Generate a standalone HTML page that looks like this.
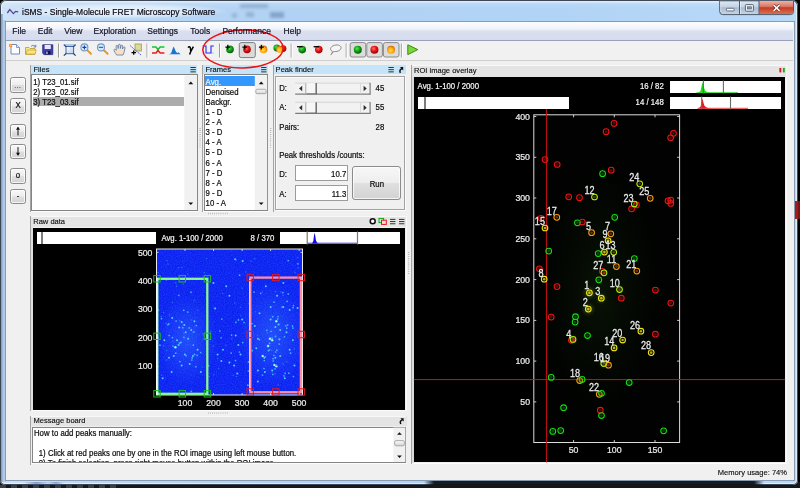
<!DOCTYPE html>
<html>
<head>
<meta charset="utf-8">
<title>iSMS</title>
<style>
html,body{margin:0;padding:0;background:#000;}
body{width:800px;height:488px;overflow:hidden;position:relative;font-family:"Liberation Sans",sans-serif;font-size:7.8px;color:#0c0c0c;}
#win div,#win span,#win svg{position:absolute;}
#win{position:absolute;left:0;top:0;width:800px;height:488px;overflow:hidden;filter:blur(0.38px);}
.t{white-space:nowrap;line-height:10px;-webkit-text-stroke:0.2px currentColor;transform:scaleY(1.06);transform-origin:0 75%;}
.h{font-size:7.55px;transform:scaleY(1.05);-webkit-text-stroke:0.12px currentColor;}
.w{color:#f6f6f6;}
.mi{font-size:8.5px;color:#141428;transform:none;}
.ax{font-size:8.75px;transform:scaleY(1.12);transform-origin:50% 55%;-webkit-text-stroke:0.22px currentColor;color:#ececec;}
.lbl{font-size:9.1px;transform:scaleY(1.14);transform-origin:50% 60%;-webkit-text-stroke:0.22px currentColor;color:#ececec;}
#frame{left:0px;top:0px;width:798px;height:485px;border-radius:6px 6px 5px 5px;background:linear-gradient(90deg,#cfe2f6 0%,#bcd8f4 10%,#b1d2f4 35%,#b1d3f5 70%,#b9d9f8 100%);box-shadow:inset 0 0 0 1px #3c4654, inset 0 0 0 2px rgba(255,255,255,.55);}
.btn{border:1px solid #8b8b8b;border-radius:2.5px;background:linear-gradient(180deg,#f7f7f7 0%,#eeeeee 48%,#dfdfdf 52%,#d3d3d3 100%);box-shadow:inset 0 0 0 1px rgba(255,255,255,.75);box-sizing:border-box;}
#win svg.main{z-index:1}
#win span.t{z-index:2}
</style>
</head>
<body>
<div id="win">
<div class="" style="left:0px;top:482px;width:800px;height:6px;background:#15171b"></div>
<div id="frame"></div>
<div class="" style="left:2px;top:1.6px;width:794px;height:7px;background:linear-gradient(180deg,rgba(255,255,255,.45),rgba(255,255,255,.12) 25%,rgba(255,255,255,0));border-radius:4px 4px 0 0"></div>
<div class="" style="left:240px;top:4px;width:28px;height:4px;background:rgba(90,120,160,.4);filter:blur(1.6px)"></div>
<div class="" style="left:246px;top:12px;width:8px;height:5px;background:rgba(90,120,160,.35);filter:blur(1.5px)"></div>
<div class="" style="left:270px;top:12px;width:14px;height:6px;background:rgba(80,110,150,.45);filter:blur(1.6px)"></div>
<div class="" style="left:232px;top:13px;width:5px;height:5px;background:rgba(90,120,160,.3);filter:blur(1.5px)"></div>
<div class="" style="left:12px;top:3px;width:215px;height:16px;background:radial-gradient(ellipse at center,rgba(255,255,255,.75) 0%,rgba(255,255,255,.5) 45%,rgba(255,255,255,0) 72%);"></div>
<div class="" style="left:1px;top:14px;width:2.2px;height:468px;background:linear-gradient(90deg,rgba(40,70,120,.55),rgba(60,100,160,.25))"></div>
<div class="" style="left:3.2px;top:20px;width:2.6px;height:462px;background:rgba(90,130,190,.25)"></div>
<div class="" style="left:2px;top:481px;width:794px;height:3.8px;background:linear-gradient(90deg,rgba(16,20,24,0) 0,rgba(16,20,24,0) 422px,rgba(16,20,24,.96) 432px,rgba(16,20,24,.96) 752px,rgba(16,20,24,0) 762px)"></div>
<div class="" style="left:24px;top:481.6px;width:40px;height:3px;background:linear-gradient(90deg,rgba(60,90,140,0),rgba(60,90,140,.5) 30%,rgba(60,90,140,.1) 60%,rgba(60,90,140,.45) 80%,rgba(60,90,140,0))"></div>
<div class="" style="left:0px;top:485.4px;width:120px;height:2.6px;background:repeating-linear-gradient(90deg,#3a3e46 0,#3a3e46 6px,#16181c 6px,#16181c 11px)"></div>
<div class="" style="left:793.6px;top:201px;width:4.2px;height:18px;background:#a31c1c;filter:blur(.6px)"></div>
<div class="" style="left:797.8px;top:201px;width:2.2px;height:18px;background:#7a1414"></div>
<svg style="left:7px;top:7px" width="13" height="10" viewBox="0 0 13 10"><path d="M0.3 6 L2.8 2.6 L6.4 6.6 L8.6 4.4 L11.2 4.8" fill="none" stroke="#53449c" stroke-width="1.3"/></svg>
<span class="t " style="left:22px;top:5.8px;font-size:8.47px;line-height:12px;color:#0a0a14;transform:none;">iSMS - Single-Molecule FRET Microscopy Software</span>
<div class="" style="left:5.5px;top:21.5px;width:788px;height:458.8px;background:#f0f0f0;box-shadow:0 0 0 1px #8a9ab0;"></div>
<div class="" style="left:6px;top:22px;width:787px;height:18px;background:linear-gradient(180deg,#fcfdff 0%,#f0f3fa 38%,#dbe0f0 52%,#d6dbee 100%);"></div>
<div class="" style="left:6px;top:40px;width:787px;height:1px;background:#98a0b6"></div>
<span class="t mi" style="left:12.3px;top:26.3px;">File</span>
<span class="t mi" style="left:37.8px;top:26.3px;">Edit</span>
<span class="t mi" style="left:64.2px;top:26.3px;">View</span>
<span class="t mi" style="left:93.5px;top:26.3px;">Exploration</span>
<span class="t mi" style="left:147.3px;top:26.3px;">Settings</span>
<span class="t mi" style="left:190.3px;top:26.3px;">Tools</span>
<span class="t mi" style="left:222.4px;top:26.3px;">Performance</span>
<span class="t mi" style="left:283.6px;top:26.3px;">Help</span>
<div class="" style="left:6px;top:41px;width:787px;height:19px;background:#f1f1f1"></div>
<div class="" style="left:6px;top:59.6px;width:787px;height:1px;background:#cfcfcf"></div>
<div class="btn" style="left:10.2px;top:77.2px;width:15.6px;height:15.4px;"></div>
<div class="btn" style="left:10.2px;top:98.4px;width:15.6px;height:15.4px;"></div>
<div class="btn" style="left:10.2px;top:123.5px;width:15.6px;height:15.4px;"></div>
<div class="btn" style="left:10.2px;top:143.7px;width:15.6px;height:15.4px;"></div>
<div class="btn" style="left:10.2px;top:168.2px;width:15.6px;height:15.4px;"></div>
<div class="btn" style="left:10.2px;top:188.8px;width:15.6px;height:15.4px;"></div>
<span class="t " style="left:14.3px;top:80.5px;color:#666;">...</span>
<span class="t " style="left:15.4px;top:101.3px;">X</span>
<span class="t " style="left:15.8px;top:170.6px;">o</span>
<span class="t " style="left:16.7px;top:191.5px;">-</span>
<div class="" style="left:30.2px;top:65px;width:1px;height:147px;background:#a4a4a4"></div>
<div class="" style="left:31.2px;top:65.3px;width:166.2px;height:9.1px;background:#c5e4f9"></div>
<span class="t h" style="left:33.5px;top:64.6px;">Files</span>
<div class="" style="left:31.4px;top:74.4px;width:166.4px;height:136.6px;background:#fff;border:1px solid #858585;box-sizing:border-box"></div>
<div class="" style="left:31px;top:211.2px;width:167px;height:1px;background:#fcfcfc"></div>
<div class="" style="left:33px;top:96.9px;width:151.2px;height:9.4px;background:#acacac"></div>
<span class="t " style="left:33.2px;top:78.2px;">1) T23_01.sif</span>
<span class="t " style="left:33.2px;top:88.2px;">2) T23_02.sif</span>
<span class="t " style="left:33.2px;top:98.2px;">3) T23_03.sif</span>
<div class="" style="left:202.4px;top:65px;width:1px;height:147px;background:#a4a4a4"></div>
<div class="" style="left:203.4px;top:65.3px;width:64.8px;height:9.1px;background:#c5e4f9"></div>
<span class="t h" style="left:205.4px;top:64.6px;">Frames</span>
<div class="" style="left:203.5px;top:74.4px;width:64.5px;height:136.6px;background:#fff;border:1px solid #858585;box-sizing:border-box"></div>
<div class="" style="left:203px;top:211.2px;width:65.5px;height:1px;background:#fcfcfc"></div>
<div class="" style="left:204.6px;top:76.4px;width:50.1px;height:9.6px;background:#3397fd"></div>
<span class="t w" style="left:205.6px;top:77.7px;">Avg.</span>
<span class="t " style="left:205.6px;top:87.8px;">Denoised</span>
<span class="t " style="left:205.6px;top:97.9px;">Backgr.</span>
<span class="t " style="left:205.6px;top:108.0px;">1 - D</span>
<span class="t " style="left:205.6px;top:118.1px;">2 - A</span>
<span class="t " style="left:205.6px;top:128.2px;">3 - D</span>
<span class="t " style="left:205.6px;top:138.3px;">4 - A</span>
<span class="t " style="left:205.6px;top:148.4px;">5 - D</span>
<span class="t " style="left:205.6px;top:158.5px;">6 - A</span>
<span class="t " style="left:205.6px;top:168.6px;">7 - D</span>
<span class="t " style="left:205.6px;top:178.7px;">8 - A</span>
<span class="t " style="left:205.6px;top:188.8px;">9 - D</span>
<span class="t " style="left:205.6px;top:198.89999999999998px;">10 - A</span>
<div class="" style="left:273.4px;top:65px;width:1px;height:147px;background:#a4a4a4"></div>
<div class="" style="left:274.4px;top:65.3px;width:131.6px;height:9.1px;background:#c5e4f9"></div>
<span class="t h" style="left:275.6px;top:64.6px;">Peak finder</span>
<div class="" style="left:274.5px;top:75.6px;width:130.6px;height:134.2px;border:1px solid #a2a2a2;box-sizing:border-box;box-shadow:inset 1px 1px 0 #fbfbfb,1px 1px 0 #fbfbfb"></div>
<span class="t " style="left:279.2px;top:84.3px;">D:</span>
<span class="t " style="left:279.2px;top:103.3px;">A:</span>
<span class="t " style="left:279.2px;top:123.2px;">Pairs:</span>
<span class="t " style="left:375.6px;top:84.3px;">45</span>
<span class="t " style="left:375.6px;top:103.3px;">55</span>
<span class="t " style="left:375.6px;top:123.2px;">28</span>
<span class="t " style="left:279.2px;top:150.5px;">Peak thresholds /counts:</span>
<span class="t " style="left:279.2px;top:169.8px;">D:</span>
<span class="t " style="left:279.2px;top:190.0px;">A:</span>
<div class="" style="left:295px;top:165.2px;width:52.8px;height:16px;background:#fff;border:1px solid #9c9c9c;box-sizing:border-box"></div>
<div class="" style="left:295px;top:184.9px;width:52.8px;height:16px;background:#fff;border:1px solid #9c9c9c;box-sizing:border-box"></div>
<span class="t " style="left:300px;top:169.8px;width:46.3px;text-align:right;transform-origin:100% 75%;">10.7</span>
<span class="t " style="left:300px;top:190.0px;width:46.3px;text-align:right;transform-origin:100% 75%;">11.3</span>
<div class="btn" style="left:352.3px;top:166px;width:49.2px;height:34px;border-radius:3px"></div>
<span class="t " style="left:352.3px;top:179.6px;width:49.2px;text-align:center;transform-origin:50% 75%;">Run</span>
<div class="" style="left:30.4px;top:216px;width:1px;height:195px;background:#a4a4a4"></div>
<div class="" style="left:31.4px;top:227px;width:1.4px;height:183px;background:#dedede"></div>
<div class="" style="left:31.4px;top:216px;width:375px;height:11.4px;background:#e4e4e4"></div>
<div class="" style="left:31.4px;top:216px;width:375px;height:1px;background:#f8f8f8"></div>
<span class="t h" style="left:33.2px;top:216.6px;">Raw data</span>
<div class="" style="left:32.6px;top:227.8px;width:372px;height:181.8px;background:#000"></div>
<div class="" style="left:31px;top:410.2px;width:375.5px;height:1px;background:#fcfcfc"></div>
<div class="" style="left:406px;top:216px;width:1px;height:195px;background:#fafafa"></div>
<div class="" style="left:36.8px;top:232.4px;width:119.5px;height:11.4px;background:#fff"></div>
<div class="" style="left:41.2px;top:231.8px;width:1.5px;height:12.6px;background:#7c7c7c"></div>
<span class="t w" style="left:161.4px;top:233.7px;">Avg. 1-100 / 2000</span>
<span class="t w" style="left:250.6px;top:233.7px;">8 / 370</span>
<div class="" style="left:280.1px;top:232.2px;width:120.3px;height:11.5px;background:#fff"></div>
<div class="" style="left:30.4px;top:416px;width:1px;height:49px;background:#a4a4a4"></div>
<div class="" style="left:31.4px;top:416.2px;width:375.4px;height:10.2px;background:#e4e4e4"></div>
<div class="" style="left:31.4px;top:416.2px;width:375px;height:1px;background:#f8f8f8"></div>
<span class="t h" style="left:33.5px;top:416.2px;">Message board</span>
<div class="" style="left:31.6px;top:426.6px;width:374.6px;height:36.4px;background:#fff;border:1px solid #858585;box-sizing:border-box"></div>
<div class="" style="left:31px;top:463.4px;width:375.5px;height:1px;background:#fcfcfc"></div>
<div style="left:32.6px;top:427.6px;width:360px;height:34.6px;overflow:hidden">
<span class="t " style="left:1.4px;top:1.2px;">How to add peaks manually:</span>
<span class="t " style="left:6.2px;top:21.4px;">1) Click at red peaks one by one in the ROI image using left mouse button.</span>
<span class="t " style="left:6.2px;top:31.4px;">2) To finish selection, press right mouse button within the ROI image.</span>
</div>
<div class="" style="left:410.8px;top:65px;width:1px;height:399px;background:#a4a4a4"></div>
<div class="" style="left:411.8px;top:76px;width:2px;height:387px;background:#dadada"></div>
<div class="" style="left:412px;top:65.4px;width:374.6px;height:11.4px;background:#e4e4e4"></div>
<div class="" style="left:412px;top:65.4px;width:374.6px;height:1px;background:#f8f8f8"></div>
<span class="t h" style="left:414px;top:65.6px;">ROI image overlay</span>
<div class="" style="left:413.8px;top:76.8px;width:371.4px;height:385.6px;background:#000"></div>
<div class="" style="left:412px;top:462.8px;width:375px;height:1px;background:#fcfcfc"></div>
<div class="" style="left:786.4px;top:65.4px;width:1px;height:398px;background:#fafafa"></div>
<span class="t w" style="left:417.6px;top:82.4px;">Avg. 1-100 / 2000</span>
<div class="" style="left:417.5px;top:97.2px;width:151.2px;height:11.4px;background:#fff"></div>
<div class="" style="left:424px;top:96.6px;width:1.5px;height:12.6px;background:#7c7c7c"></div>
<span class="t w" style="left:600px;top:82.4px;width:63.8px;text-align:right;transform-origin:100% 75%;">16 / 82</span>
<span class="t w" style="left:600px;top:98.4px;width:63.8px;text-align:right;transform-origin:100% 75%;">14 / 148</span>
<div class="" style="left:669.6px;top:81.3px;width:111.2px;height:11.6px;background:#fff"></div>
<div class="" style="left:669.6px;top:97.1px;width:111.2px;height:11.6px;background:#fff"></div>
<span class="t h" style="left:700px;top:468px;width:87px;text-align:right;">Memory usage: 74%</span>
<span class="t w ax" style="left:130px;top:361.4px;width:22.5px;text-align:right;">100</span>
<span class="t w ax" style="left:173.0px;top:397.8px;width:24px;text-align:center;">100</span>
<span class="t w ax" style="left:130px;top:332.9px;width:22.5px;text-align:right;">200</span>
<span class="t w ax" style="left:201.5px;top:397.8px;width:24px;text-align:center;">200</span>
<span class="t w ax" style="left:130px;top:304.3px;width:22.5px;text-align:right;">300</span>
<span class="t w ax" style="left:230.1px;top:397.8px;width:24px;text-align:center;">300</span>
<span class="t w ax" style="left:130px;top:275.8px;width:22.5px;text-align:right;">400</span>
<span class="t w ax" style="left:258.6px;top:397.8px;width:24px;text-align:center;">400</span>
<span class="t w ax" style="left:130px;top:247.9px;width:22.5px;text-align:right;">500</span>
<span class="t w ax" style="left:287.1px;top:397.8px;width:24px;text-align:center;">500</span>
<span class="t w lbl" style="left:579.6px;top:185.8px;width:20px;text-align:center;">12</span>
<span class="t w lbl" style="left:624.3px;top:172.8px;width:20px;text-align:center;">24</span>
<span class="t w lbl" style="left:634.2px;top:187.3px;width:20px;text-align:center;">25</span>
<span class="t w lbl" style="left:618.5px;top:193.5px;width:20px;text-align:center;">23</span>
<span class="t w lbl" style="left:541.8px;top:206.8px;width:20px;text-align:center;">17</span>
<span class="t w lbl" style="left:529.9px;top:217.2px;width:20px;text-align:center;">15</span>
<span class="t w lbl" style="left:578.5px;top:221.8px;width:20px;text-align:center;">5</span>
<span class="t w lbl" style="left:597.5px;top:222.2px;width:20px;text-align:center;">7</span>
<span class="t w lbl" style="left:595px;top:230.0px;width:20px;text-align:center;">9</span>
<span class="t w lbl" style="left:592px;top:241.0px;width:20px;text-align:center;">6</span>
<span class="t w lbl" style="left:600.5px;top:241.0px;width:20px;text-align:center;">13</span>
<span class="t w lbl" style="left:601.6px;top:255.4px;width:20px;text-align:center;">11</span>
<span class="t w lbl" style="left:621.2px;top:260.3px;width:20px;text-align:center;">21</span>
<span class="t w lbl" style="left:588.2px;top:261.4px;width:20px;text-align:center;">27</span>
<span class="t w lbl" style="left:531.1px;top:268.6px;width:20px;text-align:center;">8</span>
<span class="t w lbl" style="left:604.7px;top:278.5px;width:20px;text-align:center;">10</span>
<span class="t w lbl" style="left:576.9px;top:281.4px;width:20px;text-align:center;">1</span>
<span class="t w lbl" style="left:587.8px;top:287.2px;width:20px;text-align:center;">3</span>
<span class="t w lbl" style="left:575.2px;top:297.9px;width:20px;text-align:center;">2</span>
<span class="t w lbl" style="left:558.7px;top:329.5px;width:20px;text-align:center;">4</span>
<span class="t w lbl" style="left:607.2px;top:329.0px;width:20px;text-align:center;">20</span>
<span class="t w lbl" style="left:625px;top:320.6px;width:20px;text-align:center;">26</span>
<span class="t w lbl" style="left:599.2px;top:336.7px;width:20px;text-align:center;">14</span>
<span class="t w lbl" style="left:636.1px;top:341.2px;width:20px;text-align:center;">28</span>
<span class="t w lbl" style="left:588.8px;top:352.8px;width:20px;text-align:center;">16</span>
<span class="t w lbl" style="left:595px;top:353.8px;width:20px;text-align:center;">19</span>
<span class="t w lbl" style="left:565.1px;top:369.1px;width:20px;text-align:center;">18</span>
<span class="t w lbl" style="left:584.1px;top:382.9px;width:20px;text-align:center;">22</span>
<span class="t w ax" style="left:506px;top:396.9px;width:24px;text-align:right;">50</span>
<span class="t w ax" style="left:506px;top:356.1px;width:24px;text-align:right;">100</span>
<span class="t w ax" style="left:506px;top:315.4px;width:24px;text-align:right;">150</span>
<span class="t w ax" style="left:506px;top:274.6px;width:24px;text-align:right;">200</span>
<span class="t w ax" style="left:506px;top:233.8px;width:24px;text-align:right;">250</span>
<span class="t w ax" style="left:506px;top:193.0px;width:24px;text-align:right;">300</span>
<span class="t w ax" style="left:506px;top:152.3px;width:24px;text-align:right;">350</span>
<span class="t w ax" style="left:506px;top:111.8px;width:24px;text-align:right;">400</span>
<span class="t w ax" style="left:561.6px;top:444.8px;width:24px;text-align:center;">50</span>
<span class="t w ax" style="left:602.3px;top:444.8px;width:24px;text-align:center;">100</span>
<span class="t w ax" style="left:643.0px;top:444.8px;width:24px;text-align:center;">150</span>
<svg class="main" style="left:0;top:0" width="800" height="488" viewBox="0 0 800 488">
<defs>
<filter id="nz" x="0" y="0" width="100%" height="100%"><feTurbulence type="fractalNoise" baseFrequency="0.9" numOctaves="2" seed="3"/><feColorMatrix type="matrix" values="0 0 0 0 0.15  0 0 0 0 0.35  0 0 0 0 1  0.9 0 0 0 -0.28"/></filter>
<radialGradient id="gl"><stop offset="0" stop-color="#2f6cff" stop-opacity=".55"/><stop offset="1" stop-color="#2f6cff" stop-opacity="0"/></radialGradient>
<filter id="b1"><feGaussianBlur stdDeviation="0.45"/></filter>
<radialGradient id="gg"><stop offset="0" stop-color="#12280c" stop-opacity=".45"/><stop offset="1" stop-color="#0a1a06" stop-opacity="0"/></radialGradient>
<radialGradient id="bg_g" cx=".4" cy=".35" r=".7"><stop offset="0" stop-color="#60e060"/><stop offset=".5" stop-color="#10a010"/><stop offset="1" stop-color="#045004"/></radialGradient>
<radialGradient id="bg_r" cx=".4" cy=".35" r=".7"><stop offset="0" stop-color="#ff7070"/><stop offset=".5" stop-color="#e81010"/><stop offset="1" stop-color="#800000"/></radialGradient>
<radialGradient id="bg_o" cx=".45" cy=".6" r=".7"><stop offset="0" stop-color="#ffe040"/><stop offset=".55" stop-color="#ffa010"/><stop offset="1" stop-color="#b05000"/></radialGradient>
<linearGradient id="fold" x1="0" y1="0" x2="0" y2="1"><stop offset="0" stop-color="#fcee9c"/><stop offset="1" stop-color="#ecc848"/></linearGradient>
<linearGradient id="zb" x1="0" y1="0" x2="1" y2="1"><stop offset="0" stop-color="#ffffff"/><stop offset="1" stop-color="#b4ccec"/></linearGradient>
<filter id="ib"><feGaussianBlur stdDeviation="0.35"/></filter>
<linearGradient id="cb" x1="0" y1="0" x2="0" y2="1"><stop offset="0" stop-color="#dfe9f4"/><stop offset=".45" stop-color="#c3d2e4"/><stop offset=".5" stop-color="#a9bcd4"/><stop offset="1" stop-color="#c4d6ea"/></linearGradient>
<linearGradient id="cr" x1="0" y1="0" x2="0" y2="1"><stop offset="0" stop-color="#eeb0a0"/><stop offset=".45" stop-color="#d87060"/><stop offset=".5" stop-color="#c43c24"/><stop offset="1" stop-color="#dc7050"/></linearGradient>
<linearGradient id="sbb" x1="0" y1="0" x2="0" y2="1"><stop offset="0" stop-color="#f8f8f8"/><stop offset=".5" stop-color="#e8e8e8"/><stop offset="1" stop-color="#cfcfcf"/></linearGradient>
<linearGradient id="sbh" x1="0" y1="0" x2="1" y2="0"><stop offset="0" stop-color="#f8f8f8"/><stop offset=".5" stop-color="#e8e8e8"/><stop offset="1" stop-color="#cfcfcf"/></linearGradient>
<radialGradient id="yg"><stop offset="0" stop-color="#c8e040"/><stop offset=".4" stop-color="#708820" stop-opacity=".6"/><stop offset="1" stop-color="#304010" stop-opacity="0"/></radialGradient>
<filter id="wb"><feGaussianBlur stdDeviation="0.3"/></filter>
</defs>
<rect x="156.5" y="249.0" width="146.0" height="146.0" fill="#0a20f2"/>
<ellipse cx="187" cy="340" rx="30" ry="45" fill="url(#gl)"/>
<ellipse cx="272" cy="335" rx="34" ry="52" fill="url(#gl)"/>
<rect x="156.5" y="249.0" width="146.0" height="146.0" filter="url(#nz)" opacity=".42"/>
<g filter="url(#b1)">
<circle cx="181.7" cy="322.1" r="1.0" fill="#4cccff"/>
<circle cx="184.3" cy="325.0" r="1.0" fill="#4cccff"/>
<circle cx="179.2" cy="327.5" r="1.0" fill="#4cccff"/>
<circle cx="191.3" cy="330.1" r="1.0" fill="#4cccff"/>
<circle cx="185.6" cy="332.3" r="1.0" fill="#4cccff"/>
<circle cx="177.0" cy="340.2" r="1.0" fill="#4cccff"/>
<circle cx="180.8" cy="342.5" r="1.0" fill="#4cccff"/>
<circle cx="175.4" cy="347.2" r="1.25" fill="#70f0e8"/><circle cx="175.4" cy="347.2" r="0.55" fill="#e8ffb0"/>
<circle cx="178.6" cy="345.0" r="1.0" fill="#4cccff"/>
<circle cx="188.1" cy="338.7" r="1.0" fill="#4cccff"/>
<circle cx="169.0" cy="357.7" r="1.0" fill="#4cccff"/>
<circle cx="173.8" cy="356.1" r="1.0" fill="#4cccff"/>
<circle cx="184.9" cy="354.5" r="1.0" fill="#4cccff"/>
<circle cx="192.9" cy="356.1" r="1.0" fill="#4cccff"/>
<circle cx="181.7" cy="365.6" r="1.0" fill="#4cccff"/>
<circle cx="189.7" cy="364.0" r="1.0" fill="#4cccff"/>
<circle cx="171.6" cy="372.0" r="1.0" fill="#4cccff"/>
<circle cx="164.3" cy="340.2" r="1.0" fill="#4cccff"/>
<circle cx="197.6" cy="349.8" r="1.0" fill="#4cccff"/>
<circle cx="162.7" cy="378.3" r="1.0" fill="#4cccff"/>
<circle cx="200.8" cy="372.0" r="1.0" fill="#4cccff"/>
<circle cx="172.2" cy="318.0" r="1.0" fill="#4cccff"/>
<circle cx="194.4" cy="321.2" r="1.0" fill="#4cccff"/>
<circle cx="235.7" cy="335.5" r="1.0" fill="#4cccff"/>
<circle cx="238.3" cy="345.0" r="1.0" fill="#4cccff"/>
<circle cx="217.6" cy="354.5" r="1.0" fill="#4cccff"/>
<circle cx="221.4" cy="360.9" r="1.0" fill="#4cccff"/>
<circle cx="229.4" cy="362.5" r="1.0" fill="#4cccff"/>
<circle cx="234.1" cy="365.6" r="1.0" fill="#4cccff"/>
<circle cx="237.3" cy="373.6" r="1.0" fill="#4cccff"/>
<circle cx="226.2" cy="286.3" r="1.0" fill="#4cccff"/>
<circle cx="235.1" cy="259.3" r="1.0" fill="#4cccff"/>
<circle cx="242.7" cy="260.9" r="1.0" fill="#4cccff"/>
<circle cx="229.4" cy="295.8" r="1.0" fill="#4cccff"/>
<circle cx="215.1" cy="308.5" r="1.0" fill="#4cccff"/>
<circle cx="242.1" cy="319.6" r="1.0" fill="#4cccff"/>
<circle cx="213.5" cy="283.1" r="1.0" fill="#4cccff"/>
<circle cx="223.0" cy="349.8" r="1.0" fill="#4cccff"/>
<circle cx="240.5" cy="354.5" r="1.0" fill="#4cccff"/>
<circle cx="270.6" cy="306.9" r="1.0" fill="#4cccff"/>
<circle cx="277.0" cy="295.8" r="1.0" fill="#4cccff"/>
<circle cx="283.3" cy="306.9" r="1.0" fill="#4cccff"/>
<circle cx="259.5" cy="313.3" r="1.0" fill="#4cccff"/>
<circle cx="270.6" cy="319.6" r="1.0" fill="#4cccff"/>
<circle cx="276.3" cy="321.2" r="1.25" fill="#70f0e8"/><circle cx="276.3" cy="321.2" r="0.55" fill="#e8ffb0"/>
<circle cx="278.6" cy="324.4" r="1.0" fill="#4cccff"/>
<circle cx="275.4" cy="326.9" r="1.0" fill="#4cccff"/>
<circle cx="280.2" cy="330.1" r="1.0" fill="#4cccff"/>
<circle cx="289.7" cy="310.1" r="1.0" fill="#4cccff"/>
<circle cx="286.5" cy="332.3" r="1.0" fill="#4cccff"/>
<circle cx="270.0" cy="338.7" r="1.25" fill="#70f0e8"/><circle cx="270.0" cy="338.7" r="0.55" fill="#e8ffb0"/>
<circle cx="272.2" cy="340.2" r="1.25" fill="#70f0e8"/><circle cx="272.2" cy="340.2" r="0.55" fill="#e8ffb0"/>
<circle cx="279.5" cy="339.3" r="1.0" fill="#4cccff"/>
<circle cx="257.9" cy="338.7" r="1.0" fill="#4cccff"/>
<circle cx="268.1" cy="346.0" r="1.25" fill="#70f0e8"/><circle cx="268.1" cy="346.0" r="0.55" fill="#e8ffb0"/>
<circle cx="256.3" cy="348.2" r="1.0" fill="#4cccff"/>
<circle cx="262.7" cy="356.1" r="1.25" fill="#70f0e8"/><circle cx="262.7" cy="356.1" r="0.55" fill="#e8ffb0"/>
<circle cx="264.3" cy="357.7" r="1.0" fill="#4cccff"/>
<circle cx="275.4" cy="357.7" r="1.0" fill="#4cccff"/>
<circle cx="280.2" cy="356.1" r="1.0" fill="#4cccff"/>
<circle cx="274.4" cy="365.0" r="1.25" fill="#70f0e8"/><circle cx="274.4" cy="365.0" r="0.55" fill="#e8ffb0"/>
<circle cx="276.3" cy="366.3" r="1.25" fill="#70f0e8"/><circle cx="276.3" cy="366.3" r="0.55" fill="#e8ffb0"/>
<circle cx="272.2" cy="370.4" r="1.0" fill="#4cccff"/>
<circle cx="257.9" cy="370.4" r="1.0" fill="#4cccff"/>
<circle cx="264.9" cy="372.0" r="1.0" fill="#4cccff"/>
<circle cx="289.7" cy="349.8" r="1.0" fill="#4cccff"/>
<circle cx="292.9" cy="340.2" r="1.0" fill="#4cccff"/>
<circle cx="257.9" cy="381.5" r="1.0" fill="#4cccff"/>
<circle cx="284.9" cy="378.3" r="1.0" fill="#4cccff"/>
<circle cx="294.4" cy="365.6" r="1.0" fill="#4cccff"/>
<circle cx="254.8" cy="326.0" r="1.0" fill="#4cccff"/>
<circle cx="297.6" cy="307.9" r="1.0" fill="#4cccff"/>
<circle cx="283.3" cy="283.1" r="1.0" fill="#4cccff"/>
<circle cx="265.9" cy="286.3" r="1.0" fill="#4cccff"/>
<circle cx="204.3" cy="272.4" r="0.75" fill="#2c7cff" opacity=".8"/>
<circle cx="251.1" cy="261.3" r="0.75" fill="#2c7cff" opacity=".8"/>
<circle cx="234.6" cy="302.9" r="0.75" fill="#2c7cff" opacity=".8"/>
<circle cx="166.3" cy="323.1" r="0.75" fill="#2c7cff" opacity=".8"/>
<circle cx="163.4" cy="312.6" r="0.75" fill="#2c7cff" opacity=".8"/>
<circle cx="168.0" cy="263.9" r="0.75" fill="#2c7cff" opacity=".8"/>
<circle cx="218.7" cy="368.4" r="0.75" fill="#2c7cff" opacity=".8"/>
<circle cx="175.7" cy="282.7" r="0.75" fill="#2c7cff" opacity=".8"/>
<circle cx="247.7" cy="385.6" r="0.75" fill="#2c7cff" opacity=".8"/>
<circle cx="240.5" cy="307.3" r="0.75" fill="#2c7cff" opacity=".8"/>
<circle cx="297.6" cy="257.6" r="0.75" fill="#2c7cff" opacity=".8"/>
<circle cx="280.8" cy="292.1" r="0.75" fill="#2c7cff" opacity=".8"/>
<circle cx="178.6" cy="267.7" r="0.75" fill="#2c7cff" opacity=".8"/>
<circle cx="202.1" cy="366.9" r="0.75" fill="#2c7cff" opacity=".8"/>
<circle cx="183.8" cy="333.6" r="0.75" fill="#2c7cff" opacity=".8"/>
<circle cx="249.4" cy="303.9" r="0.75" fill="#2c7cff" opacity=".8"/>
<circle cx="236.3" cy="259.9" r="0.75" fill="#2c7cff" opacity=".8"/>
<circle cx="166.5" cy="280.2" r="0.75" fill="#2c7cff" opacity=".8"/>
<circle cx="255.3" cy="311.7" r="0.75" fill="#2c7cff" opacity=".8"/>
<circle cx="202.9" cy="334.1" r="0.75" fill="#2c7cff" opacity=".8"/>
<circle cx="222.8" cy="293.6" r="0.75" fill="#2c7cff" opacity=".8"/>
<circle cx="271.6" cy="350.3" r="0.75" fill="#2c7cff" opacity=".8"/>
<circle cx="192.9" cy="332.6" r="0.75" fill="#2c7cff" opacity=".8"/>
<circle cx="233.1" cy="375.3" r="0.75" fill="#2c7cff" opacity=".8"/>
<circle cx="262.3" cy="291.9" r="0.75" fill="#2c7cff" opacity=".8"/>
<circle cx="298.2" cy="267.8" r="0.75" fill="#2c7cff" opacity=".8"/>
<circle cx="217.8" cy="358.5" r="0.75" fill="#2c7cff" opacity=".8"/>
<circle cx="179.7" cy="320.4" r="0.75" fill="#2c7cff" opacity=".8"/>
<circle cx="163.6" cy="345.9" r="0.75" fill="#2c7cff" opacity=".8"/>
<circle cx="267.3" cy="332.4" r="0.75" fill="#2c7cff" opacity=".8"/>
<circle cx="283.2" cy="295.6" r="0.75" fill="#2c7cff" opacity=".8"/>
<circle cx="257.4" cy="335.4" r="0.75" fill="#2c7cff" opacity=".8"/>
<circle cx="240.9" cy="315.8" r="0.75" fill="#2c7cff" opacity=".8"/>
<circle cx="278.1" cy="385.1" r="0.75" fill="#2c7cff" opacity=".8"/>
<circle cx="225.8" cy="345.3" r="0.75" fill="#2c7cff" opacity=".8"/>
<circle cx="166.7" cy="350.6" r="0.75" fill="#2c7cff" opacity=".8"/>
<circle cx="250.5" cy="392.0" r="0.75" fill="#2c7cff" opacity=".8"/>
<circle cx="275.5" cy="291.4" r="0.75" fill="#2c7cff" opacity=".8"/>
<circle cx="213.2" cy="345.9" r="0.75" fill="#2c7cff" opacity=".8"/>
<circle cx="161.2" cy="316.6" r="0.75" fill="#2c7cff" opacity=".8"/>
<circle cx="182.0" cy="267.6" r="0.75" fill="#2c7cff" opacity=".8"/>
<circle cx="166.4" cy="360.1" r="0.75" fill="#2c7cff" opacity=".8"/>
<circle cx="176.5" cy="286.2" r="0.75" fill="#2c7cff" opacity=".8"/>
<circle cx="213.9" cy="374.7" r="0.75" fill="#2c7cff" opacity=".8"/>
<circle cx="169.5" cy="314.8" r="0.75" fill="#2c7cff" opacity=".8"/>
<circle cx="236.6" cy="376.4" r="0.75" fill="#2c7cff" opacity=".8"/>
<circle cx="275.2" cy="373.7" r="0.75" fill="#2c7cff" opacity=".8"/>
<circle cx="197.8" cy="310.0" r="0.75" fill="#2c7cff" opacity=".8"/>
<circle cx="209.3" cy="376.6" r="0.75" fill="#2c7cff" opacity=".8"/>
<circle cx="295.0" cy="272.4" r="0.75" fill="#2c7cff" opacity=".8"/>
<circle cx="183.2" cy="283.9" r="0.75" fill="#2c7cff" opacity=".8"/>
<circle cx="191.4" cy="319.9" r="0.75" fill="#2c7cff" opacity=".8"/>
<circle cx="242.2" cy="288.3" r="0.75" fill="#2c7cff" opacity=".8"/>
<circle cx="158.6" cy="310.5" r="0.75" fill="#2c7cff" opacity=".8"/>
<circle cx="210.8" cy="331.4" r="0.75" fill="#2c7cff" opacity=".8"/>
<circle cx="294.3" cy="349.1" r="0.75" fill="#2c7cff" opacity=".8"/>
<circle cx="231.7" cy="338.7" r="0.75" fill="#2c7cff" opacity=".8"/>
<circle cx="254.7" cy="258.7" r="0.75" fill="#2c7cff" opacity=".8"/>
<circle cx="286.6" cy="361.8" r="0.75" fill="#2c7cff" opacity=".8"/>
<circle cx="283.1" cy="364.3" r="0.75" fill="#2c7cff" opacity=".8"/>
<circle cx="214.1" cy="307.7" r="0.75" fill="#2c7cff" opacity=".8"/>
<circle cx="172.8" cy="341.1" r="0.75" fill="#2c7cff" opacity=".8"/>
<circle cx="166.9" cy="260.6" r="0.75" fill="#2c7cff" opacity=".8"/>
<circle cx="187.9" cy="274.0" r="0.75" fill="#2c7cff" opacity=".8"/>
<circle cx="206.6" cy="258.5" r="0.75" fill="#2c7cff" opacity=".8"/>
<circle cx="158.0" cy="272.5" r="0.75" fill="#2c7cff" opacity=".8"/>
<circle cx="172.5" cy="302.6" r="0.75" fill="#2c7cff" opacity=".8"/>
<circle cx="161.6" cy="375.2" r="0.75" fill="#2c7cff" opacity=".8"/>
<circle cx="245.8" cy="272.1" r="0.75" fill="#2c7cff" opacity=".8"/>
<circle cx="194.1" cy="300.3" r="0.75" fill="#2c7cff" opacity=".8"/>
<circle cx="269.6" cy="343.4" r="0.85" fill="#40b8ff" opacity=".95"/>
<circle cx="297.9" cy="263.8" r="0.85" fill="#40b8ff" opacity=".95"/>
<circle cx="259.4" cy="339.6" r="0.85" fill="#40b8ff" opacity=".95"/>
<circle cx="279.2" cy="339.4" r="0.85" fill="#40b8ff" opacity=".95"/>
<circle cx="268.4" cy="350.7" r="0.85" fill="#40b8ff" opacity=".95"/>
<circle cx="277.7" cy="318.9" r="0.85" fill="#40b8ff" opacity=".95"/>
<circle cx="266.8" cy="330.3" r="0.85" fill="#40b8ff" opacity=".95"/>
<circle cx="271.1" cy="331.3" r="0.85" fill="#40b8ff" opacity=".95"/>
<circle cx="238.5" cy="319.9" r="0.85" fill="#40b8ff" opacity=".95"/>
<circle cx="287.1" cy="301.4" r="0.85" fill="#40b8ff" opacity=".95"/>
<circle cx="273.1" cy="358.7" r="0.85" fill="#40b8ff" opacity=".95"/>
<circle cx="285.1" cy="373.3" r="0.85" fill="#40b8ff" opacity=".95"/>
<circle cx="251.9" cy="323.5" r="0.85" fill="#40b8ff" opacity=".95"/>
<circle cx="269.6" cy="349.8" r="0.85" fill="#40b8ff" opacity=".95"/>
<circle cx="288.2" cy="260.6" r="0.85" fill="#40b8ff" opacity=".95"/>
<circle cx="288.2" cy="293.9" r="0.85" fill="#40b8ff" opacity=".95"/>
<circle cx="282.9" cy="292.7" r="0.85" fill="#40b8ff" opacity=".95"/>
<circle cx="276.3" cy="365.3" r="0.85" fill="#40b8ff" opacity=".95"/>
<circle cx="272.1" cy="338.2" r="0.85" fill="#40b8ff" opacity=".95"/>
<circle cx="284.4" cy="336.8" r="0.85" fill="#40b8ff" opacity=".95"/>
<circle cx="272.8" cy="374.4" r="0.85" fill="#40b8ff" opacity=".95"/>
<circle cx="287.6" cy="325.1" r="0.85" fill="#40b8ff" opacity=".95"/>
<circle cx="285.9" cy="325.8" r="0.85" fill="#40b8ff" opacity=".95"/>
<circle cx="275.7" cy="352.0" r="0.85" fill="#40b8ff" opacity=".95"/>
<circle cx="276.9" cy="350.2" r="0.85" fill="#40b8ff" opacity=".95"/>
<circle cx="254.1" cy="292.2" r="0.85" fill="#40b8ff" opacity=".95"/>
<circle cx="282.0" cy="307.0" r="0.85" fill="#40b8ff" opacity=".95"/>
<circle cx="260.7" cy="293.3" r="0.85" fill="#40b8ff" opacity=".95"/>
<circle cx="290.5" cy="353.2" r="0.85" fill="#40b8ff" opacity=".95"/>
<circle cx="293.1" cy="307.7" r="0.85" fill="#40b8ff" opacity=".95"/>
<circle cx="274.0" cy="302.2" r="0.85" fill="#40b8ff" opacity=".95"/>
<circle cx="284.0" cy="375.9" r="0.85" fill="#40b8ff" opacity=".95"/>
<circle cx="262.4" cy="375.1" r="0.85" fill="#40b8ff" opacity=".95"/>
<circle cx="286.8" cy="328.2" r="0.85" fill="#40b8ff" opacity=".95"/>
<circle cx="248.4" cy="371.0" r="0.85" fill="#40b8ff" opacity=".95"/>
<circle cx="272.7" cy="316.7" r="0.85" fill="#40b8ff" opacity=".95"/>
<circle cx="279.2" cy="344.1" r="0.85" fill="#40b8ff" opacity=".95"/>
<circle cx="293.5" cy="305.5" r="0.85" fill="#40b8ff" opacity=".95"/>
<circle cx="288.8" cy="373.2" r="0.85" fill="#40b8ff" opacity=".95"/>
<circle cx="292.9" cy="328.1" r="0.85" fill="#40b8ff" opacity=".95"/>
<circle cx="264.3" cy="360.5" r="0.85" fill="#40b8ff" opacity=".95"/>
<circle cx="275.5" cy="336.4" r="0.85" fill="#40b8ff" opacity=".95"/>
<circle cx="292.5" cy="325.9" r="0.85" fill="#40b8ff" opacity=".95"/>
<circle cx="244.1" cy="322.5" r="0.85" fill="#40b8ff" opacity=".95"/>
<circle cx="249.9" cy="355.1" r="0.85" fill="#40b8ff" opacity=".95"/>
<circle cx="278.1" cy="316.5" r="0.85" fill="#40b8ff" opacity=".95"/>
<circle cx="273.9" cy="355.5" r="0.85" fill="#40b8ff" opacity=".95"/>
<circle cx="275.0" cy="368.8" r="0.85" fill="#40b8ff" opacity=".95"/>
<circle cx="273.2" cy="361.1" r="0.85" fill="#40b8ff" opacity=".95"/>
<circle cx="293.4" cy="376.5" r="0.85" fill="#40b8ff" opacity=".95"/>
<circle cx="265.3" cy="356.8" r="0.85" fill="#40b8ff" opacity=".95"/>
<circle cx="249.6" cy="303.7" r="0.85" fill="#40b8ff" opacity=".95"/>
<circle cx="248.5" cy="361.9" r="0.85" fill="#40b8ff" opacity=".95"/>
<circle cx="172.4" cy="337.7" r="0.85" fill="#40b8ff" opacity=".95"/>
<circle cx="183.9" cy="337.4" r="0.85" fill="#40b8ff" opacity=".95"/>
<circle cx="179.5" cy="343.1" r="0.85" fill="#40b8ff" opacity=".95"/>
<circle cx="205.7" cy="339.0" r="0.85" fill="#40b8ff" opacity=".95"/>
<circle cx="191.8" cy="360.0" r="0.85" fill="#40b8ff" opacity=".95"/>
<circle cx="183.8" cy="310.3" r="0.85" fill="#40b8ff" opacity=".95"/>
<circle cx="179.9" cy="361.6" r="0.85" fill="#40b8ff" opacity=".95"/>
<circle cx="167.9" cy="324.8" r="0.85" fill="#40b8ff" opacity=".95"/>
<circle cx="197.1" cy="355.4" r="0.85" fill="#40b8ff" opacity=".95"/>
<circle cx="186.1" cy="355.7" r="0.85" fill="#40b8ff" opacity=".95"/>
<circle cx="187.8" cy="312.1" r="0.85" fill="#40b8ff" opacity=".95"/>
<circle cx="168.8" cy="323.9" r="0.85" fill="#40b8ff" opacity=".95"/>
<circle cx="196.2" cy="325.6" r="0.85" fill="#40b8ff" opacity=".95"/>
<circle cx="176.1" cy="321.0" r="0.85" fill="#40b8ff" opacity=".95"/>
<circle cx="169.2" cy="335.4" r="0.85" fill="#40b8ff" opacity=".95"/>
<circle cx="173.0" cy="346.0" r="0.85" fill="#40b8ff" opacity=".95"/>
<circle cx="160.0" cy="345.2" r="0.85" fill="#40b8ff" opacity=".95"/>
<circle cx="178.9" cy="295.3" r="0.85" fill="#40b8ff" opacity=".95"/>
<circle cx="194.0" cy="331.9" r="0.85" fill="#40b8ff" opacity=".95"/>
<circle cx="161.5" cy="318.7" r="0.85" fill="#40b8ff" opacity=".95"/>
<circle cx="189.2" cy="327.9" r="0.85" fill="#40b8ff" opacity=".95"/>
<circle cx="194.6" cy="354.4" r="0.85" fill="#40b8ff" opacity=".95"/>
<circle cx="193.3" cy="345.2" r="0.85" fill="#40b8ff" opacity=".95"/>
<circle cx="200.7" cy="352.5" r="0.85" fill="#40b8ff" opacity=".95"/>
<circle cx="191.0" cy="292.2" r="0.85" fill="#40b8ff" opacity=".95"/>
<circle cx="195.9" cy="366.8" r="0.85" fill="#40b8ff" opacity=".95"/>
<circle cx="182.7" cy="327.7" r="0.85" fill="#40b8ff" opacity=".95"/>
<circle cx="207.3" cy="299.3" r="0.85" fill="#40b8ff" opacity=".95"/>
<circle cx="191.2" cy="391.3" r="0.85" fill="#40b8ff" opacity=".95"/>
<circle cx="175.8" cy="353.2" r="0.85" fill="#40b8ff" opacity=".95"/>
<circle cx="206.8" cy="335.4" r="0.85" fill="#40b8ff" opacity=".95"/>
<circle cx="192.2" cy="357.9" r="0.85" fill="#40b8ff" opacity=".95"/>
<circle cx="221.1" cy="337.8" r="0.85" fill="#40b8ff" opacity=".95"/>
<circle cx="235.5" cy="360.6" r="0.85" fill="#40b8ff" opacity=".95"/>
<circle cx="231.6" cy="335.1" r="0.85" fill="#40b8ff" opacity=".95"/>
<circle cx="219.8" cy="331.0" r="0.85" fill="#40b8ff" opacity=".95"/>
<circle cx="242.7" cy="342.5" r="0.85" fill="#40b8ff" opacity=".95"/>
<circle cx="221.8" cy="319.0" r="0.85" fill="#40b8ff" opacity=".95"/>
<circle cx="264.0" cy="368.5" r="0.85" fill="#40b8ff" opacity=".95"/>
<circle cx="239.6" cy="275.2" r="0.85" fill="#40b8ff" opacity=".95"/>
<circle cx="239.5" cy="352.0" r="0.85" fill="#40b8ff" opacity=".95"/>
<circle cx="252.2" cy="350.7" r="0.85" fill="#40b8ff" opacity=".95"/>
<circle cx="231.2" cy="353.1" r="0.85" fill="#40b8ff" opacity=".95"/>
<circle cx="208.7" cy="365.8" r="0.85" fill="#40b8ff" opacity=".95"/>
<circle cx="235.9" cy="322.4" r="0.85" fill="#40b8ff" opacity=".95"/>
<circle cx="247.9" cy="385.2" r="0.85" fill="#40b8ff" opacity=".95"/>
</g>
<rect x="156.5" y="249.0" width="146.0" height="146.0" fill="none" stroke="#e8e8e8" stroke-width="1"/>
<path d="M185.0 395.0V393.0M185.0 249.0V251.0M156.5 366.5H158.5M302.5 366.5H300.5" stroke="#e8e8e8" stroke-width=".8"/>
<path d="M213.5 395.0V393.0M213.5 249.0V251.0M156.5 338.0H158.5M302.5 338.0H300.5" stroke="#e8e8e8" stroke-width=".8"/>
<path d="M242.1 395.0V393.0M242.1 249.0V251.0M156.5 309.4H158.5M302.5 309.4H300.5" stroke="#e8e8e8" stroke-width=".8"/>
<path d="M270.6 395.0V393.0M270.6 249.0V251.0M156.5 280.9H158.5M302.5 280.9H300.5" stroke="#e8e8e8" stroke-width=".8"/>
<path d="M299.1 395.0V393.0M299.1 249.0V251.0M156.5 252.4H158.5M302.5 252.4H300.5" stroke="#e8e8e8" stroke-width=".8"/>
<rect x="157.3" y="278.8" width="50" height="115" fill="none" stroke="#8cf88c" stroke-width="2.3"/>
<path d="M156.8 278V395" stroke="#f4fff4" stroke-width="1.6"/>
<rect x="250.3" y="277.6" width="50.6" height="114.6" fill="none" stroke="#ff8ca0" stroke-width="2.3"/>
<path d="M249.6 279V391" stroke="#ffd0d8" stroke-width="1"/>
<rect x="153.8" y="275.6" width="6.4" height="6.4" fill="none" stroke="#18c018" stroke-width="1"/>
<rect x="179.1" y="275.6" width="6.4" height="6.4" fill="none" stroke="#18c018" stroke-width="1"/>
<rect x="204.2" y="275.6" width="6.4" height="6.4" fill="none" stroke="#18c018" stroke-width="1"/>
<rect x="153.8" y="333.1" width="6.4" height="6.4" fill="none" stroke="#18c018" stroke-width="1"/>
<rect x="204.2" y="333.1" width="6.4" height="6.4" fill="none" stroke="#18c018" stroke-width="1"/>
<rect x="153.8" y="390.6" width="6.4" height="6.4" fill="none" stroke="#18c018" stroke-width="1"/>
<rect x="179.1" y="390.6" width="6.4" height="6.4" fill="none" stroke="#18c018" stroke-width="1"/>
<rect x="204.2" y="390.6" width="6.4" height="6.4" fill="none" stroke="#18c018" stroke-width="1"/>
<rect x="247.0" y="274.3" width="6.4" height="6.4" fill="none" stroke="#e81818" stroke-width="1"/>
<rect x="272.6" y="274.3" width="6.4" height="6.4" fill="none" stroke="#e81818" stroke-width="1"/>
<rect x="298.0" y="274.3" width="6.4" height="6.4" fill="none" stroke="#e81818" stroke-width="1"/>
<rect x="247.0" y="331.3" width="6.4" height="6.4" fill="none" stroke="#e81818" stroke-width="1"/>
<rect x="298.0" y="331.3" width="6.4" height="6.4" fill="none" stroke="#e81818" stroke-width="1"/>
<rect x="247.0" y="388.8" width="6.4" height="6.4" fill="none" stroke="#e81818" stroke-width="1"/>
<rect x="272.6" y="388.8" width="6.4" height="6.4" fill="none" stroke="#e81818" stroke-width="1"/>
<rect x="298.0" y="388.8" width="6.4" height="6.4" fill="none" stroke="#e81818" stroke-width="1"/>
<rect x="533.8" y="114.8" width="145.80000000000007" height="327.7" fill="#010201"/>
<ellipse cx="600" cy="290" rx="62" ry="130" fill="url(#gg)"/>
<rect x="533.8" y="114.8" width="145.8" height="327.7" fill="none" stroke="#dcdcdc" stroke-width="1"/>
<path d="M573.6 442.5V440.0M573.6 114.8V117.3" stroke="#dcdcdc" stroke-width=".9"/>
<path d="M614.3 442.5V440.0M614.3 114.8V117.3" stroke="#dcdcdc" stroke-width=".9"/>
<path d="M655.0 442.5V440.0M655.0 114.8V117.3" stroke="#dcdcdc" stroke-width=".9"/>
<path d="M533.8 401.9H536.3M679.6 401.9H677.1" stroke="#dcdcdc" stroke-width=".9"/>
<path d="M533.8 361.1H536.3M679.6 361.1H677.1" stroke="#dcdcdc" stroke-width=".9"/>
<path d="M533.8 320.4H536.3M679.6 320.4H677.1" stroke="#dcdcdc" stroke-width=".9"/>
<path d="M533.8 279.6H536.3M679.6 279.6H677.1" stroke="#dcdcdc" stroke-width=".9"/>
<path d="M533.8 238.8H536.3M679.6 238.8H677.1" stroke="#dcdcdc" stroke-width=".9"/>
<path d="M533.8 198.0H536.3M679.6 198.0H677.1" stroke="#dcdcdc" stroke-width=".9"/>
<path d="M533.8 157.3H536.3M679.6 157.3H677.1" stroke="#dcdcdc" stroke-width=".9"/>
<path d="M533.8 116.5H536.3M679.6 116.5H677.1" stroke="#dcdcdc" stroke-width=".9"/>
<path d="M546.4 109V462.4" stroke="#d01010" stroke-width="1"/><path d="M413.8 379.6H785.2" stroke="#d01010" stroke-width="1"/>
<circle cx="589.4" cy="292.8" r="8" fill="url(#yg)" opacity="0.5"/>
<circle cx="601.3" cy="298.2" r="7" fill="url(#yg)" opacity="0.4"/>
<circle cx="588.3" cy="309.1" r="8" fill="url(#yg)" opacity="0.5"/>
<circle cx="604.4" cy="252.1" r="6" fill="url(#yg)" opacity="0.3"/>
<circle cx="608.1" cy="240.8" r="6" fill="url(#yg)" opacity="0.3"/>
<circle cx="614.1" cy="347.9" r="5" fill="url(#yg)" opacity="0.25"/>
<circle cx="603.8" cy="363.5" r="6" fill="url(#yg)" opacity="0.3"/>
<circle cx="573" cy="339.4" r="6" fill="url(#yg)" opacity="0.3"/>
<circle cx="619.5" cy="289.5" r="5" fill="url(#yg)" opacity="0.25"/>
<circle cx="614.1" cy="123.4" r="1.3" fill="rgba(190,0,0,.55)" filter="url(#b1)"/>
<circle cx="614.1" cy="123.4" r="2.85" fill="none" stroke="#ee1414" stroke-width="1.05"/>
<circle cx="606.1" cy="131.7" r="1.3" fill="rgba(190,0,0,.55)" filter="url(#b1)"/>
<circle cx="606.1" cy="131.7" r="2.85" fill="none" stroke="#ee1414" stroke-width="1.05"/>
<circle cx="673.5" cy="133.3" r="1.3" fill="rgba(190,0,0,.55)" filter="url(#b1)"/>
<circle cx="673.5" cy="133.3" r="2.85" fill="none" stroke="#ee1414" stroke-width="1.05"/>
<circle cx="670.6" cy="137.8" r="1.3" fill="rgba(190,0,0,.55)" filter="url(#b1)"/>
<circle cx="670.6" cy="137.8" r="2.85" fill="none" stroke="#ee1414" stroke-width="1.05"/>
<circle cx="545.0" cy="159.5" r="1.3" fill="rgba(190,0,0,.55)" filter="url(#b1)"/>
<circle cx="545.0" cy="159.5" r="2.85" fill="none" stroke="#ee1414" stroke-width="1.05"/>
<circle cx="557.2" cy="164.5" r="1.3" fill="rgba(190,0,0,.55)" filter="url(#b1)"/>
<circle cx="557.2" cy="164.5" r="2.85" fill="none" stroke="#ee1414" stroke-width="1.05"/>
<circle cx="611.2" cy="170.2" r="1.3" fill="rgba(190,0,0,.55)" filter="url(#b1)"/>
<circle cx="611.2" cy="170.2" r="2.85" fill="none" stroke="#ee1414" stroke-width="1.05"/>
<circle cx="568.7" cy="196.8" r="1.3" fill="rgba(190,0,0,.55)" filter="url(#b1)"/>
<circle cx="568.7" cy="196.8" r="2.85" fill="none" stroke="#ee1414" stroke-width="1.05"/>
<circle cx="579.5" cy="197.7" r="1.3" fill="rgba(190,0,0,.55)" filter="url(#b1)"/>
<circle cx="579.5" cy="197.7" r="2.85" fill="none" stroke="#ee1414" stroke-width="1.05"/>
<circle cx="668.0" cy="200.8" r="1.3" fill="rgba(190,0,0,.55)" filter="url(#b1)"/>
<circle cx="668.0" cy="200.8" r="2.85" fill="none" stroke="#ee1414" stroke-width="1.05"/>
<circle cx="670.8" cy="200.0" r="1.3" fill="rgba(190,0,0,.55)" filter="url(#b1)"/>
<circle cx="670.8" cy="200.0" r="2.85" fill="none" stroke="#ee1414" stroke-width="1.05"/>
<circle cx="670.8" cy="203.4" r="1.3" fill="rgba(190,0,0,.55)" filter="url(#b1)"/>
<circle cx="670.8" cy="203.4" r="2.85" fill="none" stroke="#ee1414" stroke-width="1.05"/>
<circle cx="631.6" cy="208.8" r="1.3" fill="rgba(190,0,0,.55)" filter="url(#b1)"/>
<circle cx="631.6" cy="208.8" r="2.85" fill="none" stroke="#ee1414" stroke-width="1.05"/>
<circle cx="636.4" cy="204.9" r="1.3" fill="rgba(190,0,0,.55)" filter="url(#b1)"/>
<circle cx="636.4" cy="204.9" r="2.85" fill="none" stroke="#ee1414" stroke-width="1.05"/>
<circle cx="602.6" cy="173.7" r="1.3" fill="rgba(0,150,0,.5)" filter="url(#b1)"/>
<circle cx="602.6" cy="173.7" r="2.85" fill="none" stroke="#14e014" stroke-width="1.05"/>
<circle cx="594.5" cy="197.0" r="1.3" fill="rgba(150,70,0,.7)" filter="url(#b1)"/>
<circle cx="594.5" cy="197.0" r="2.85" fill="none" stroke="#a8f410" stroke-width="1.05"/>
<circle cx="639.7" cy="183.8" r="1.3" fill="rgba(150,70,0,.7)" filter="url(#b1)"/>
<circle cx="639.7" cy="183.8" r="2.85" fill="none" stroke="#a8f410" stroke-width="1.05"/>
<circle cx="650.2" cy="198.3" r="1.3" fill="rgba(150,70,0,.7)" filter="url(#b1)"/>
<circle cx="650.2" cy="198.3" r="2.85" fill="none" stroke="#ffa010" stroke-width="1.05"/>
<circle cx="634.3" cy="204.0" r="1.3" fill="rgba(150,70,0,.7)" filter="url(#b1)"/>
<circle cx="634.3" cy="204.0" r="2.85" fill="none" stroke="#a8f410" stroke-width="1.05"/>
<circle cx="541.1" cy="218.3" r="1.3" fill="rgba(190,0,0,.55)" filter="url(#b1)"/>
<circle cx="541.1" cy="218.3" r="2.85" fill="none" stroke="#ee1414" stroke-width="1.05"/>
<circle cx="556.8" cy="217.3" r="1.3" fill="rgba(150,70,0,.7)" filter="url(#b1)"/>
<circle cx="556.8" cy="217.3" r="2.85" fill="none" stroke="#ffa010" stroke-width="1.05"/>
<circle cx="545.0" cy="228.0" r="1.3" fill="rgba(230,210,40,.8)" filter="url(#b1)"/>
<circle cx="545.0" cy="228.0" r="2.85" fill="none" stroke="#f0e814" stroke-width="1.05"/>
<circle cx="577.4" cy="222.8" r="1.3" fill="rgba(0,150,0,.5)" filter="url(#b1)"/>
<circle cx="577.4" cy="222.8" r="2.85" fill="none" stroke="#14e014" stroke-width="1.05"/>
<circle cx="582.3" cy="222.0" r="1.3" fill="rgba(190,0,0,.55)" filter="url(#b1)"/>
<circle cx="582.3" cy="222.0" r="2.85" fill="none" stroke="#ee1414" stroke-width="1.05"/>
<circle cx="614.7" cy="217.3" r="1.3" fill="rgba(0,150,0,.5)" filter="url(#b1)"/>
<circle cx="614.7" cy="217.3" r="2.85" fill="none" stroke="#14e014" stroke-width="1.05"/>
<circle cx="591.6" cy="232.7" r="1.3" fill="rgba(150,70,0,.7)" filter="url(#b1)"/>
<circle cx="591.6" cy="232.7" r="2.85" fill="none" stroke="#ffa010" stroke-width="1.05"/>
<circle cx="610.8" cy="233.8" r="1.3" fill="rgba(150,70,0,.7)" filter="url(#b1)"/>
<circle cx="610.8" cy="233.8" r="2.85" fill="none" stroke="#ffa010" stroke-width="1.05"/>
<circle cx="608.1" cy="240.8" r="1.3" fill="rgba(230,210,40,.8)" filter="url(#b1)"/>
<circle cx="608.1" cy="240.8" r="2.85" fill="none" stroke="#f0e814" stroke-width="1.05"/>
<circle cx="604.4" cy="252.1" r="1.3" fill="rgba(230,210,40,.8)" filter="url(#b1)"/>
<circle cx="604.4" cy="252.1" r="2.85" fill="none" stroke="#f0e814" stroke-width="1.05"/>
<circle cx="613.7" cy="252.3" r="1.3" fill="rgba(150,70,0,.7)" filter="url(#b1)"/>
<circle cx="613.7" cy="252.3" r="2.85" fill="none" stroke="#a8f410" stroke-width="1.05"/>
<circle cx="598.2" cy="253.6" r="1.3" fill="rgba(0,150,0,.5)" filter="url(#b1)"/>
<circle cx="598.2" cy="253.6" r="2.85" fill="none" stroke="#14e014" stroke-width="1.05"/>
<circle cx="548.7" cy="251.1" r="1.3" fill="rgba(0,150,0,.5)" filter="url(#b1)"/>
<circle cx="548.7" cy="251.1" r="2.85" fill="none" stroke="#14e014" stroke-width="1.05"/>
<circle cx="634.3" cy="258.5" r="1.3" fill="rgba(0,150,0,.5)" filter="url(#b1)"/>
<circle cx="634.3" cy="258.5" r="2.85" fill="none" stroke="#14e014" stroke-width="1.05"/>
<circle cx="616.4" cy="266.6" r="1.3" fill="rgba(150,70,0,.7)" filter="url(#b1)"/>
<circle cx="616.4" cy="266.6" r="2.85" fill="none" stroke="#ffa010" stroke-width="1.05"/>
<circle cx="636.8" cy="271.1" r="1.3" fill="rgba(150,70,0,.7)" filter="url(#b1)"/>
<circle cx="636.8" cy="271.1" r="2.85" fill="none" stroke="#ffa010" stroke-width="1.05"/>
<circle cx="602.4" cy="271.3" r="1.3" fill="rgba(190,0,0,.55)" filter="url(#b1)"/>
<circle cx="602.4" cy="271.3" r="2.85" fill="none" stroke="#ee1414" stroke-width="1.05"/>
<circle cx="604.0" cy="272.8" r="1.3" fill="rgba(150,70,0,.7)" filter="url(#b1)"/>
<circle cx="604.0" cy="272.8" r="2.85" fill="none" stroke="#a8f410" stroke-width="1.05"/>
<circle cx="598.8" cy="279.8" r="1.3" fill="rgba(0,150,0,.5)" filter="url(#b1)"/>
<circle cx="598.8" cy="279.8" r="2.85" fill="none" stroke="#14e014" stroke-width="1.05"/>
<circle cx="539.4" cy="268.8" r="1.3" fill="rgba(190,0,0,.55)" filter="url(#b1)"/>
<circle cx="539.4" cy="268.8" r="2.85" fill="none" stroke="#ee1414" stroke-width="1.05"/>
<circle cx="544.2" cy="279.2" r="1.3" fill="rgba(230,210,40,.8)" filter="url(#b1)"/>
<circle cx="544.2" cy="279.2" r="2.85" fill="none" stroke="#f0e814" stroke-width="1.05"/>
<circle cx="557.0" cy="286.6" r="1.3" fill="rgba(190,0,0,.55)" filter="url(#b1)"/>
<circle cx="557.0" cy="286.6" r="2.85" fill="none" stroke="#ee1414" stroke-width="1.05"/>
<circle cx="619.5" cy="289.5" r="1.3" fill="rgba(150,70,0,.7)" filter="url(#b1)"/>
<circle cx="619.5" cy="289.5" r="2.85" fill="none" stroke="#a8f410" stroke-width="1.05"/>
<circle cx="655.4" cy="290.1" r="1.3" fill="rgba(190,0,0,.55)" filter="url(#b1)"/>
<circle cx="655.4" cy="290.1" r="2.85" fill="none" stroke="#ee1414" stroke-width="1.05"/>
<circle cx="589.4" cy="292.8" r="1.3" fill="rgba(230,210,40,.8)" filter="url(#b1)"/>
<circle cx="589.4" cy="292.8" r="2.85" fill="none" stroke="#f0e814" stroke-width="1.05"/>
<circle cx="601.3" cy="298.2" r="1.3" fill="rgba(230,210,40,.8)" filter="url(#b1)"/>
<circle cx="601.3" cy="298.2" r="2.85" fill="none" stroke="#f0e814" stroke-width="1.05"/>
<circle cx="621.3" cy="298.2" r="1.3" fill="rgba(190,0,0,.55)" filter="url(#b1)"/>
<circle cx="621.3" cy="298.2" r="2.85" fill="none" stroke="#ee1414" stroke-width="1.05"/>
<circle cx="670.8" cy="303.1" r="1.3" fill="rgba(190,0,0,.55)" filter="url(#b1)"/>
<circle cx="670.8" cy="303.1" r="2.85" fill="none" stroke="#ee1414" stroke-width="1.05"/>
<circle cx="588.3" cy="309.1" r="1.3" fill="rgba(230,210,40,.8)" filter="url(#b1)"/>
<circle cx="588.3" cy="309.1" r="2.85" fill="none" stroke="#f0e814" stroke-width="1.05"/>
<circle cx="551.2" cy="317.1" r="1.3" fill="rgba(190,0,0,.55)" filter="url(#b1)"/>
<circle cx="551.2" cy="317.1" r="2.85" fill="none" stroke="#ee1414" stroke-width="1.05"/>
<circle cx="575.5" cy="316.7" r="1.3" fill="rgba(0,150,0,.5)" filter="url(#b1)"/>
<circle cx="575.5" cy="316.7" r="2.85" fill="none" stroke="#14e014" stroke-width="1.05"/>
<circle cx="575.1" cy="322.1" r="1.3" fill="rgba(0,150,0,.5)" filter="url(#b1)"/>
<circle cx="575.1" cy="322.1" r="2.85" fill="none" stroke="#14e014" stroke-width="1.05"/>
<circle cx="587.5" cy="335.5" r="1.3" fill="rgba(0,150,0,.5)" filter="url(#b1)"/>
<circle cx="587.5" cy="335.5" r="2.85" fill="none" stroke="#14e014" stroke-width="1.05"/>
<circle cx="571.4" cy="340.3" r="1.3" fill="rgba(190,0,0,.55)" filter="url(#b1)"/>
<circle cx="571.4" cy="340.3" r="2.85" fill="none" stroke="#ee1414" stroke-width="1.05"/>
<circle cx="573.0" cy="339.4" r="1.3" fill="rgba(150,70,0,.7)" filter="url(#b1)"/>
<circle cx="573.0" cy="339.4" r="2.85" fill="none" stroke="#a8f410" stroke-width="1.05"/>
<circle cx="622.6" cy="340.0" r="1.3" fill="rgba(230,210,40,.8)" filter="url(#b1)"/>
<circle cx="622.6" cy="340.0" r="2.85" fill="none" stroke="#f0e814" stroke-width="1.05"/>
<circle cx="640.9" cy="331.2" r="1.3" fill="rgba(230,210,40,.8)" filter="url(#b1)"/>
<circle cx="640.9" cy="331.2" r="2.85" fill="none" stroke="#f0e814" stroke-width="1.05"/>
<circle cx="655.4" cy="334.2" r="1.3" fill="rgba(190,0,0,.55)" filter="url(#b1)"/>
<circle cx="655.4" cy="334.2" r="2.85" fill="none" stroke="#ee1414" stroke-width="1.05"/>
<circle cx="614.1" cy="347.9" r="1.3" fill="rgba(230,210,40,.8)" filter="url(#b1)"/>
<circle cx="614.1" cy="347.9" r="2.85" fill="none" stroke="#f0e814" stroke-width="1.05"/>
<circle cx="651.2" cy="352.6" r="1.3" fill="rgba(230,210,40,.8)" filter="url(#b1)"/>
<circle cx="651.2" cy="352.6" r="2.85" fill="none" stroke="#f0e814" stroke-width="1.05"/>
<circle cx="603.8" cy="363.5" r="1.3" fill="rgba(150,70,0,.7)" filter="url(#b1)"/>
<circle cx="603.8" cy="363.5" r="2.85" fill="none" stroke="#a8f410" stroke-width="1.05"/>
<circle cx="608.5" cy="365.2" r="1.3" fill="rgba(150,70,0,.7)" filter="url(#b1)"/>
<circle cx="608.5" cy="365.2" r="2.85" fill="none" stroke="#ffa010" stroke-width="1.05"/>
<circle cx="551.2" cy="377.4" r="1.3" fill="rgba(0,150,0,.5)" filter="url(#b1)"/>
<circle cx="551.2" cy="377.4" r="2.85" fill="none" stroke="#14e014" stroke-width="1.05"/>
<circle cx="579.7" cy="380.5" r="1.3" fill="rgba(150,70,0,.7)" filter="url(#b1)"/>
<circle cx="579.7" cy="380.5" r="2.85" fill="none" stroke="#ffa010" stroke-width="1.05"/>
<circle cx="582.1" cy="379.4" r="1.3" fill="rgba(0,150,0,.5)" filter="url(#b1)"/>
<circle cx="582.1" cy="379.4" r="2.85" fill="none" stroke="#14e014" stroke-width="1.05"/>
<circle cx="629.2" cy="382.5" r="1.3" fill="rgba(0,150,0,.5)" filter="url(#b1)"/>
<circle cx="629.2" cy="382.5" r="2.85" fill="none" stroke="#14e014" stroke-width="1.05"/>
<circle cx="599.3" cy="394.3" r="1.3" fill="rgba(150,70,0,.7)" filter="url(#b1)"/>
<circle cx="599.3" cy="394.3" r="2.85" fill="none" stroke="#ffa010" stroke-width="1.05"/>
<circle cx="601.5" cy="393.3" r="1.3" fill="rgba(0,150,0,.5)" filter="url(#b1)"/>
<circle cx="601.5" cy="393.3" r="2.85" fill="none" stroke="#14e014" stroke-width="1.05"/>
<circle cx="563.6" cy="407.7" r="1.3" fill="rgba(0,150,0,.5)" filter="url(#b1)"/>
<circle cx="563.6" cy="407.7" r="2.85" fill="none" stroke="#14e014" stroke-width="1.05"/>
<circle cx="600.3" cy="410.2" r="1.3" fill="rgba(190,0,0,.55)" filter="url(#b1)"/>
<circle cx="600.3" cy="410.2" r="2.85" fill="none" stroke="#ee1414" stroke-width="1.05"/>
<circle cx="601.5" cy="415.5" r="1.3" fill="rgba(0,150,0,.5)" filter="url(#b1)"/>
<circle cx="601.5" cy="415.5" r="2.85" fill="none" stroke="#14e014" stroke-width="1.05"/>
<circle cx="552.8" cy="431.4" r="1.3" fill="rgba(0,150,0,.5)" filter="url(#b1)"/>
<circle cx="552.8" cy="431.4" r="2.85" fill="none" stroke="#14e014" stroke-width="1.05"/>
<circle cx="560.7" cy="430.6" r="1.3" fill="rgba(0,150,0,.5)" filter="url(#b1)"/>
<circle cx="560.7" cy="430.6" r="2.85" fill="none" stroke="#14e014" stroke-width="1.05"/>
<circle cx="663.6" cy="430.8" r="1.3" fill="rgba(0,150,0,.5)" filter="url(#b1)"/>
<circle cx="663.6" cy="430.8" r="2.85" fill="none" stroke="#14e014" stroke-width="1.05"/>
<g filter="url(#wb)">
<path d="M719.7 0.8H793.5V11.5Q793.5 14.6 790.5 14.6H722.7Q719.7 14.6 719.7 11.5Z" fill="url(#cb)" stroke="#4e5a6c" stroke-width="1"/>
<path d="M759.2 1.2H793V11.3Q793 14.1 790.2 14.1H759.2Z" fill="url(#cr)"/>
<path d="M739.5 1V14.4M759 1V14.4" stroke="#4e5a6c" stroke-width="1"/><path d="M740.5 1.4V14M720.7 1.4V12" stroke="rgba(255,255,255,.6)" stroke-width=".8"/>
<rect x="726.4" y="8.3" width="7.8" height="2.6" rx=".8" fill="#fff" stroke="#4a5668" stroke-width=".8"/>
<rect x="745.4" y="4.6" width="8" height="6.6" rx=".8" fill="#f4f6fa" stroke="#4a5668" stroke-width=".9"/><rect x="747.5" y="6.8" width="3.8" height="2.2" fill="#8ca0bc" stroke="#4a5668" stroke-width=".7"/>
<path d="M773.6 5L779.6 10.8M779.6 5L773.6 10.8" stroke="#5a2018" stroke-width="2.8"/><path d="M773.6 5L779.6 10.8M779.6 5L773.6 10.8" stroke="#fff" stroke-width="1.6"/>
<rect x="184.4" y="75.4" width="12.5" height="134.6" fill="#f1f1f1"/>
<path d="M188.4 84.2L190.8 81.6L193.20000000000002 84.2Z" fill="#111"/>
<path d="M188.4 202.4L190.8 205.0L193.20000000000002 202.4Z" fill="#111"/>
<rect x="254.8" y="75.4" width="12.3" height="134.6" fill="#f1f1f1"/>
<path d="M258.8 84.2L261.2 81.6L263.59999999999997 84.2Z" fill="#111"/>
<path d="M258.8 202.4L261.2 205.0L263.59999999999997 202.4Z" fill="#111"/>
<rect x="255.8" y="89.3" width="10.4" height="4.4" rx="1.4" fill="url(#sbb)" stroke="#9a9a9a" stroke-width=".8"/>
<rect x="393.3" y="427.6" width="12" height="34.4" fill="#f1f1f1"/>
<path d="M397.1 434.8L399.5 432.20000000000005L401.9 434.8Z" fill="#111"/>
<path d="M397.1 455.40000000000003L399.5 458.0L401.9 455.40000000000003Z" fill="#111"/>
<rect x="394.6" y="440.6" width="9.8" height="5.2" rx="1.5" fill="url(#sbb)" stroke="#9a9a9a" stroke-width=".8"/>
<rect x="295.2" y="82.8" width="75" height="11.5" fill="#f2f2f2"/>
<path d="M295.2 83.1H370" stroke="#cdcdcd" stroke-width=".8"/>
<path d="M295.2 94.2H370.6" stroke="#7c7c7c" stroke-width="1.3"/><path d="M370.1 82.8V94.6" stroke="#7c7c7c" stroke-width="1.2"/>
<path d="M305.9 83.39999999999999V93.8" stroke="#9c9c9c" stroke-width="1"/>
<path d="M360.6 83.39999999999999V93.8" stroke="#d8d8d8" stroke-width="1"/>
<rect x="306.6" y="83.2" width="9.6" height="10.6" fill="#f6f6f6"/>
<path d="M316.2 83.0V94.2" stroke="#6c6c6c" stroke-width="1.5"/><path d="M306.6 93.8H316.6" stroke="#6c6c6c" stroke-width="1"/>
<path d="M302.2 85.8L299.1 88.5L302.2 91.2Z" fill="#2a2a2a"/>
<path d="M363.6 85.8L366.7 88.5L363.6 91.2Z" fill="#2a2a2a"/>
<rect x="295.2" y="102" width="75" height="11.5" fill="#f2f2f2"/>
<path d="M295.2 102.3H370" stroke="#cdcdcd" stroke-width=".8"/>
<path d="M295.2 113.4H370.6" stroke="#7c7c7c" stroke-width="1.3"/><path d="M370.1 102V113.8" stroke="#7c7c7c" stroke-width="1.2"/>
<path d="M305.9 102.6V113" stroke="#9c9c9c" stroke-width="1"/>
<path d="M360.6 102.6V113" stroke="#d8d8d8" stroke-width="1"/>
<rect x="306.6" y="102.4" width="9.6" height="10.6" fill="#f6f6f6"/>
<path d="M316.2 102.2V113.4" stroke="#6c6c6c" stroke-width="1.5"/><path d="M306.6 113H316.6" stroke="#6c6c6c" stroke-width="1"/>
<path d="M302.2 105.0L299.1 107.7L302.2 110.4Z" fill="#2a2a2a"/>
<path d="M363.6 105.0L366.7 107.7L363.6 110.4Z" fill="#2a2a2a"/>
<rect x="190.4" y="67.0" width="5.4" height="0.95" fill="#183818"/><rect x="190.4" y="69.2" width="5.4" height="0.95" fill="#183818"/><rect x="190.4" y="71.4" width="5.4" height="0.95" fill="#183818"/>
<rect x="261.1" y="67.0" width="5.4" height="0.95" fill="#183818"/><rect x="261.1" y="69.2" width="5.4" height="0.95" fill="#183818"/><rect x="261.1" y="71.4" width="5.4" height="0.95" fill="#183818"/>
<rect x="388.4" y="67.0" width="5.4" height="0.95" fill="#183818"/><rect x="388.4" y="69.2" width="5.4" height="0.95" fill="#183818"/><rect x="388.4" y="71.4" width="5.4" height="0.95" fill="#183818"/>
<rect x="390" y="218.9" width="5.4" height="0.95" fill="#183818"/><rect x="390" y="221.1" width="5.4" height="0.95" fill="#183818"/><rect x="390" y="223.3" width="5.4" height="0.95" fill="#183818"/>
<rect x="399" y="218.9" width="5.4" height="0.95" fill="#183818"/><rect x="399" y="221.1" width="5.4" height="0.95" fill="#183818"/><rect x="399" y="223.3" width="5.4" height="0.95" fill="#183818"/>
<path d="M400.40000000000003 72.8C399.2 70.6 400.2 69.2 402.0 68.8" fill="none" stroke="#0a0a0a" stroke-width="1.5"/><path d="M400.0 67H403.2V70.4Z" fill="#0a0a0a"/>
<path d="M400.8 424.0C399.59999999999997 421.8 400.59999999999997 420.4 402.4 420.0" fill="none" stroke="#0a0a0a" stroke-width="1.5"/><path d="M400.4 418.2H403.59999999999997V421.59999999999997Z" fill="#0a0a0a"/>
<circle cx="372.7" cy="221.3" r="2.5" fill="#fff" stroke="#111" stroke-width="1.5"/>
<rect x="379" y="218.4" width="4.6" height="4.2" fill="none" stroke="#10a810" stroke-width="1"/><rect x="381.5" y="220.2" width="4.8" height="4.2" fill="#fdd" stroke="#e01818" stroke-width="1"/>
<rect x="779.4" y="68" width="1.9" height="4.4" fill="#e01818"/><rect x="782.9" y="68" width="1.9" height="4.4" fill="#18b018"/>
<path d="M307 243.2H357.5" stroke="#1818e0" stroke-width=".9"/><path d="M312 243.5L313.3 241L314 235.5L314.6 232.8L315.3 236L316 240.5L317 242.5L318.5 243.5Z" fill="#1010e0"/>
<path d="M307.2 231.4V244.6M357.5 231.4V244.6" stroke="#7a7a7a" stroke-width="1.2"/>
<path d="M696.5 92.6H738" stroke="#18d018" stroke-width=".8"/><path d="M698 92.8L700.5 91L701.6 86L702.6 82L703.6 86.5L705 90.5L707 92L710.5 92.8Z" fill="#18e018"/>
<path d="M703.4 80.6V93.6M723.4 80.6V93.6" stroke="#6a6a6a" stroke-width="1.1"/>
<path d="M697.5 108.3H748" stroke="#e01818" stroke-width=".8"/><path d="M698.5 108.6L700.6 106.5L701.6 102L702.6 98.4L703.4 102.5L704.6 106L707 107.8L712 108.6Z" fill="#f01818"/>
<path d="M701.7 96.5V109.5M730.5 96.5V109.5" stroke="#6a6a6a" stroke-width="1.1"/>
<path d="M200.2 128V149" stroke="#b4b4b4" stroke-width="1.6" stroke-dasharray=".9 1.2"/><path d="M200.89999999999998 128.7V149" stroke="#fff" stroke-width="1" stroke-dasharray=".9 1.2"/>
<path d="M270.8 128V149" stroke="#b4b4b4" stroke-width="1.6" stroke-dasharray=".9 1.2"/><path d="M271.5 128.7V149" stroke="#fff" stroke-width="1" stroke-dasharray=".9 1.2"/>
<path d="M408.8 252V275" stroke="#b4b4b4" stroke-width="1.6" stroke-dasharray=".9 1.2"/><path d="M409.5 252.7V275" stroke="#fff" stroke-width="1" stroke-dasharray=".9 1.2"/>
<path d="M208 213.6H229" stroke="#b4b4b4" stroke-width="1.6" stroke-dasharray=".9 1.2"/><path d="M208.7 214.29999999999998H229" stroke="#fff" stroke-width="1" stroke-dasharray=".9 1.2"/>
<path d="M208 413.2H229" stroke="#b4b4b4" stroke-width="1.6" stroke-dasharray=".9 1.2"/><path d="M208.7 413.9H229" stroke="#fff" stroke-width="1" stroke-dasharray=".9 1.2"/>
<path d="M18 135.4V127.4" stroke="#111" stroke-width="1" fill="none"/><path d="M16 129.8L18 126.8L20 129.8Z" fill="#111"/>
<path d="M18 147.2V155.2" stroke="#111" stroke-width="1" fill="none"/><path d="M16 152.8L18 155.8L20 152.8Z" fill="#111"/>
</g>
<g filter="url(#ib)">
<path d="M58.5 43.5V57.5" stroke="#9a9a9a" stroke-width="1"/><path d="M59.5 43.5V57.5" stroke="#fff" stroke-width="1"/>
<path d="M147 43.5V57.5" stroke="#9a9a9a" stroke-width="1"/><path d="M148 43.5V57.5" stroke="#fff" stroke-width="1"/>
<path d="M219.5 43.5V57.5" stroke="#9a9a9a" stroke-width="1"/><path d="M220.5 43.5V57.5" stroke="#fff" stroke-width="1"/>
<path d="M291.2 43.5V57.5" stroke="#9a9a9a" stroke-width="1"/><path d="M292.2 43.5V57.5" stroke="#fff" stroke-width="1"/>
<path d="M346.2 43.5V57.5" stroke="#9a9a9a" stroke-width="1"/><path d="M347.2 43.5V57.5" stroke="#fff" stroke-width="1"/>
<path d="M401.4 43.5V57.5" stroke="#9a9a9a" stroke-width="1"/><path d="M402.4 43.5V57.5" stroke="#fff" stroke-width="1"/>
<path d="M11 44.5H16.5L19.5 47.5V54H11Z" fill="#fdfdff" stroke="#6c8cc0" stroke-width="1"/><path d="M16.5 44.5V47.5H19.5" fill="#d8e4f4" stroke="#6c8cc0" stroke-width=".8"/><rect x="9.2" y="44" width="3" height="3" fill="#f08030"/><rect x="10" y="44.8" width="1.4" height="1.4" fill="#ffe090"/>
<path d="M25.5 47.5H29L30 48.5H35V54.3H25.5Z" fill="url(#fold)" stroke="#b89830" stroke-width=".8"/><path d="M25.8 54L27.5 50H36.3L35 54Z" fill="#fae47c" stroke="#b89830" stroke-width=".6"/><path d="M31 46.5C32.5 45 34.5 45 35.5 46.5M35.8 44.8V47H33.6" fill="none" stroke="#4878c0" stroke-width=".9"/>
<path d="M42.7 44.8H52.8V54.6H44L42.7 53.3Z" fill="#3c3cb0" stroke="#282880" stroke-width=".8"/><rect x="44.6" y="45" width="6.2" height="4" fill="#e8e8f8"/><rect x="45.5" y="51" width="5" height="3.4" fill="#181840"/><rect x="46.2" y="51.6" width="1.5" height="2.3" fill="#c0c0d8"/>
<rect x="66" y="46.5" width="7.6" height="7.2" fill="url(#zb)" stroke="#4068a8" stroke-width="1"/><path d="M63.8 44.6L66.3 46.8M75.6 44.6L73.3 46.8M63.8 55.6L66.3 53.4M75.6 55.6L73.3 53.4" stroke="#183878" stroke-width="1.2"/><path d="M64 45H75.5" stroke="#5078b0" stroke-width=".7"/>
<path d="M87.0 50L91.0 53.8" stroke="#e89830" stroke-width="2" stroke-linecap="round"/>
<circle cx="84.4" cy="47.4" r="3.5" fill="#d4ecff" stroke="#7898c0" stroke-width="1.1"/>
<path d="M82.4 47.4H86.4M84.4 45.4V49.4" stroke="#1840a0" stroke-width="1.1"/>
<path d="M103.6 50L107.6 53.8" stroke="#e89830" stroke-width="2" stroke-linecap="round"/>
<circle cx="101" cy="47.4" r="3.5" fill="#d4ecff" stroke="#7898c0" stroke-width="1.1"/>
<path d="M98.8 47.4H103.2" stroke="#3068c0" stroke-width="1.3"/>
<path d="M116.5 55C115.5 53 114 51 113.8 49.8C114.5 48.8 115.6 49.3 116.3 50.3L116 46C116.3 45 117.5 45 117.8 46L118.2 48.5L118.4 45C118.8 44 120 44 120.3 45L120.4 48.5L121 45.5C121.5 44.6 122.6 44.9 122.7 46L122.5 49L123.5 47.2C124.2 46.5 125.2 47 125 48L124 52.5L123 55Z" fill="#fbe0c0" stroke="#5878a8" stroke-width=".8"/>
<rect x="135" y="44" width="6.4" height="7" fill="#d0d090" stroke="#a8a860" stroke-width=".9"/><path d="M136 46H140.5M136 48H140.5" stroke="#e8e8b8" stroke-width=".8"/><path d="M130.3 45.8L141 55" stroke="#3030e0" stroke-width=".9" stroke-dasharray="1.6 1"/><path d="M131.5 52.6H136M133.7 50.4V54.8" stroke="#000" stroke-width="1.3"/>
<path d="M152 47H156L158 49.6L160.2 47H164.4" fill="none" stroke="#10c830" stroke-width="1.5"/><path d="M152 53H156L158 50.4L160.2 53H164.4" fill="none" stroke="#f01818" stroke-width="1.5"/>
<path d="M168.6 54.2L171 53.4L172.6 49L173.6 46.4L174.8 49L176 52L177.5 53L178.6 52.2L179.6 53.6L180.8 54.2Z" fill="#1474d4"/>
<path d="M188 47.6C189 46.3 190.2 46.6 190.4 48.2L190.8 51.5M193.4 46.6L190.8 51.5L189.6 54.6" fill="none" stroke="#000" stroke-width="1.5"/>
<path d="M202.8 46H206V53H211V46H213.8" fill="none" stroke="#2828f0" stroke-width="1.1"/><path d="M202.8 53H206M211 53H213.8" stroke="#9090ff" stroke-width=".6"/>
<rect x="239.3" y="42.6" width="16" height="15" rx="2" fill="#dadada" stroke="#7c7c7c" stroke-width="1"/>
<circle cx="230" cy="49.4" r="3.8" fill="url(#bg_g)"/><path d="M225.4 47.2H230.2M227.8 44.8V49.6" stroke="#000" stroke-width="1.25"/>
<circle cx="247" cy="49.4" r="3.8" fill="url(#bg_r)"/><path d="M242.4 47.2H247.2M244.8 44.8V49.6" stroke="#000" stroke-width="1.25"/>
<circle cx="263.5" cy="49.4" r="3.8" fill="url(#bg_o)"/><path d="M258.9 47.2H263.7M261.3 44.8V49.6" stroke="#000" stroke-width="1.25"/>
<circle cx="283" cy="48.6" r="3.4" fill="url(#bg_r)"/><circle cx="276.8" cy="48" r="3.4" fill="url(#bg_g)"/><circle cx="279.6" cy="49.4" r="3.3" fill="url(#bg_o)"/>
<circle cx="302.2" cy="49.6" r="3.8" fill="url(#bg_g)"/><path d="M297.0 46.7H302.59999999999997" stroke="#000" stroke-width="1.3"/>
<circle cx="318.8" cy="49.6" r="3.8" fill="url(#bg_r)"/><path d="M313.6 46.7H319.2" stroke="#000" stroke-width="1.3"/>
<path d="M332.5 51.5C329.5 50 330 46.5 334.5 45.3C338.5 44.3 341.5 45.8 341 48.2C340.5 50.8 336.5 52 333.5 51.5C333 52.8 332 53.6 330.8 54.6C332 53.4 332.3 52.5 332.5 51.5Z" fill="#f6f6f6" stroke="#808080" stroke-width=".9"/>
<rect x="350.2" y="42.6" width="15.6" height="14.4" rx="2" fill="#dcdcdc" stroke="#8a8a8a" stroke-width="1"/><circle cx="357.8" cy="49.8" r="4" fill="url(#bg_g)"/>
<rect x="366.8" y="42.6" width="15.6" height="14.4" rx="2" fill="#dcdcdc" stroke="#8a8a8a" stroke-width="1"/><circle cx="374.4" cy="49.8" r="4" fill="url(#bg_r)"/>
<rect x="383.4" y="42.6" width="15.6" height="14.4" rx="2" fill="#dcdcdc" stroke="#8a8a8a" stroke-width="1"/><circle cx="391" cy="49.8" r="4" fill="url(#bg_o)"/>
<path d="M407.8 44.8L417.8 49.6L407.8 54.6Z" fill="#78d838" stroke="#3c8818" stroke-width="1" stroke-linejoin="round"/>
</g>
<ellipse cx="243" cy="49" rx="40.2" ry="19" fill="none" stroke="#ea1212" stroke-width="1.5" transform="rotate(-1.5 243 49)"/>
</svg>
</div>
</body>
</html>
